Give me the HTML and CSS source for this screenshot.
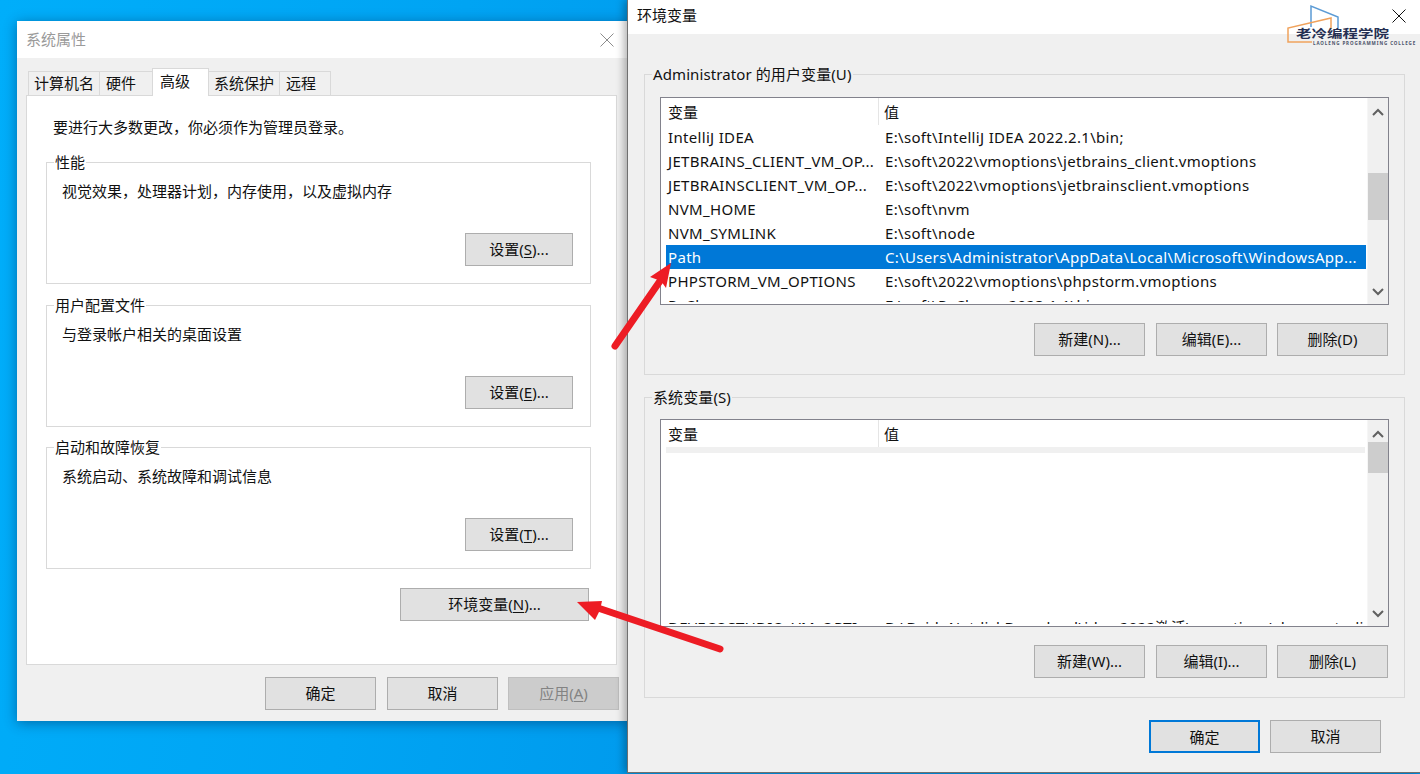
FILE: index.html
```html
<!DOCTYPE html>
<html lang="zh-CN">
<head>
<meta charset="utf-8">
<title>环境变量</title>
<link rel="stylesheet" href="styles.css">
</head>
<body>
<main class="desktop">
  <section class="window props">
    <header class="titlebar props-title">
      <span class="title-muted">系统属性</span>
      <svg class="close" viewBox="0 0 14 14"><path d="M.5.5l13 13M13.500.5l-13 13" stroke="#8c8c8c" fill="none"/></svg>
    </header>
    <div class="props-body">
      <nav class="tabs">
        <span class="tab">计算机名</span>
        <span class="tab tab-wide">硬件</span>
        <span class="tab tab-active">高级</span>
        <span class="tab">系统保护</span>
        <span class="tab tab-wide">远程</span>
      </nav>
      <div class="panel">
        <p class="intro">要进行大多数更改，你必须作为管理员登录。</p>
        <fieldset class="group">
          <legend>性能</legend>
          <p class="group-text">视觉效果，处理器计划，内存使用，以及虚拟内存</p>
          <button class="btn btn-small">设置(<u>S</u>)...</button>
        </fieldset>
        <fieldset class="group">
          <legend>用户配置文件</legend>
          <p class="group-text">与登录帐户相关的桌面设置</p>
          <button class="btn btn-small">设置(<u>E</u>)...</button>
        </fieldset>
        <fieldset class="group">
          <legend>启动和故障恢复</legend>
          <p class="group-text">系统启动、系统故障和调试信息</p>
          <button class="btn btn-small">设置(<u>T</u>)...</button>
        </fieldset>
        <div class="env-row"><button class="btn btn-env">环境变量(<u>N</u>)...</button></div>
      </div>
      <footer class="props-foot">
        <button class="btn">确定</button>
        <button class="btn">取消</button>
        <button class="btn btn-disabled">应用(<u>A</u>)</button>
      </footer>
    </div>
  </section>

  <section class="window env">
    <header class="titlebar env-title">
      <span class="env-name">环境变量</span>
      <svg class="close" viewBox="0 0 14 14"><path d="M.5.5l13 13M13.500.5l-13 13" stroke="#111" fill="none"/></svg>
    </header>
    <div class="env-body">
      <fieldset class="var-group">
        <legend>Administrator 的用户变量(U)</legend>
        <div class="list">
          <div class="list-main">
            <div class="list-head"><span class="head-name">变量</span><span class="head-val">值</span></div>
            <div class="row"><span class="cell-name">IntelliJ IDEA</span><span class="cell-val">E:\soft\IntelliJ IDEA 2022.2.1\bin;</span></div>
            <div class="row"><span class="cell-name">JETBRAINS_CLIENT_VM_OP...</span><span class="cell-val">E:\soft\2022\vmoptions\jetbrains_client.vmoptions</span></div>
            <div class="row"><span class="cell-name">JETBRAINSCLIENT_VM_OP...</span><span class="cell-val">E:\soft\2022\vmoptions\jetbrainsclient.vmoptions</span></div>
            <div class="row"><span class="cell-name">NVM_HOME</span><span class="cell-val">E:\soft\nvm</span></div>
            <div class="row"><span class="cell-name">NVM_SYMLINK</span><span class="cell-val">E:\soft\node</span></div>
            <div class="row row-selected"><span class="cell-name">Path</span><span class="cell-val">C:\Users\Administrator\AppData\Local\Microsoft\WindowsApp...</span></div>
            <div class="row"><span class="cell-name">PHPSTORM_VM_OPTIONS</span><span class="cell-val">E:\soft\2022\vmoptions\phpstorm.vmoptions</span></div>
            <div class="row"><span class="cell-name">PyCharm</span><span class="cell-val">E:\soft\PyCharm 2023.1.1\bin;</span></div>
          </div>
          <div class="scrollbar">
            <svg class="arrow" viewBox="0 0 12 8"><path d="M1 7l5-5 5 5" stroke="#606060" stroke-width="2" fill="none"/></svg>
            <div class="track"><div class="thumb thumb-user"></div></div>
            <svg class="arrow" viewBox="0 0 12 8"><path d="M1 1l5 5 5-5" stroke="#606060" stroke-width="2" fill="none"/></svg>
          </div>
        </div>
        <div class="actions">
          <button class="btn">新建(N)...</button>
          <button class="btn btn-nudge">编辑(E)...</button>
          <button class="btn">删除(D)</button>
        </div>
      </fieldset>
      <fieldset class="var-group var-group-sys">
        <legend>系统变量(S)</legend>
        <div class="list">
          <div class="list-main">
            <div class="list-head"><span class="head-name">变量</span><span class="head-val">值</span></div>
            <div class="blank-band"></div>
            <div class="blank-rows"></div>
            <div class="row"><span class="cell-name">DEVECOSTUDIO_VM_OPTI...</span><span class="cell-val">D:\BaiduNetdiskDownload\idea 2022激活\vmoptions\devecostudio.vmoptions</span></div>
          </div>
          <div class="scrollbar">
            <svg class="arrow" viewBox="0 0 12 8"><path d="M1 7l5-5 5 5" stroke="#606060" stroke-width="2" fill="none"/></svg>
            <div class="track"><div class="thumb thumb-sys"></div></div>
            <svg class="arrow" viewBox="0 0 12 8"><path d="M1 1l5 5 5-5" stroke="#606060" stroke-width="2" fill="none"/></svg>
          </div>
        </div>
        <div class="actions">
          <button class="btn">新建(W)...</button>
          <button class="btn btn-nudge">编辑(I)...</button>
          <button class="btn">删除(L)</button>
        </div>
      </fieldset>
      <footer class="env-foot">
        <button class="btn btn-default">确定</button>
        <button class="btn">取消</button>
      </footer>
    </div>
  </section>

  <svg class="arrows" viewBox="0 0 1420 774">
    <path class="shaft" d="M615 346L660 281"/>
    <path class="shaft" d="M720 649L598 608"/>
    <path class="head" d="M671 263L650 277L661 281L666 288Z"/>
    <path class="head" d="M577 602L602 601L600 610L595 620Z"/>
  </svg>

  <div class="logo">
    <svg class="logo-mark" viewBox="0 0 130 44">
      <path d="M25 23V2L52 13V24" stroke="#5b9bd5" stroke-width="1.500" fill="none"/>
      <path d="M45 25V14L2 24V38H26" stroke="#f0a25c" stroke-width="1.500" fill="none"/>
    </svg>
    <span class="logo-cn">老冷编程学院</span>
    <span class="logo-en">LAOLENG PROGRAMMING COLLEGE</span>
  </div>
</main>
</body>
</html>
```
FILE: styles.css
```css
* { box-sizing: border-box; }
html, body { margin: 0; height: 100%; }
body { overflow: hidden; font: 15px/20px "Noto Sans", "Noto Sans CJK SC", sans-serif; color: #111; }
p { margin: 0; }
u { text-underline-offset: 2px; }

.desktop {
  position: relative;
  width: 1420px;
  height: 774px;
  overflow: hidden;
  background: linear-gradient(100deg, #00aefa 0%, #00a4f3 30%, #0096ea 60%, #0090e4 100%);
}

.window {
  position: absolute;
  background: #f0f0f0;
  display: flex;
  flex-direction: column;
}
.props {
  left: 17px; top: 21px; width: 611px; height: 700px;
  box-shadow: 0 2px 12px rgba(0, 30, 70, .45);
}
.env {
  left: 627px; top: 0; width: 793px; height: 773px;
  border-left: 1px solid #707070;
  border-bottom: 1px solid #707070;
  box-shadow: -3px 0 8px rgba(0, 0, 0, .3);
}

.titlebar {
  background: #fff;
  display: flex;
  justify-content: space-between;
  align-items: center;
  flex: none;
}
.props-title { height: 37px; padding: 0 14px 0 9px; }
.env-title { height: 34px; padding: 0 14px 3px 9px; }
.title-muted { color: #9a9a9a; margin-bottom: 2px; }
.env-name { margin-bottom: 2px; }
.close { width: 14px; height: 14px; }

.props-body { flex: 1; padding: 10px 9px 0; display: flex; flex-direction: column; }
.tabs { display: flex; height: 27px; margin-left: 2px; align-items: flex-end; position: relative; z-index: 1; }
.tab {
  height: 24px;
  padding: 0 5px;
  line-height: 22px;
  white-space: nowrap;
  border: 1px solid #d9d9d9;
  border-bottom: 0;
  border-right: 0;
}
.tab-wide { padding-left: 6px; padding-right: 16px; }
.tab-wide:last-child { padding-right: 14px; border-right: 1px solid #d9d9d9; }
.tab-active {
  height: 28px;
  padding: 1px 18px 0 7px;
  background: #fff;
  border-right: 1px solid #d9d9d9;
  margin-bottom: -1px;
}
.tab-active + .tab { border-left: 0; }

.panel {
  height: 570px;
  margin-right: 2px;
  background: #fff;
  border: 1px solid #d9d9d9;
  padding: 21px 25px 0 19px;
  display: flex;
  flex-direction: column;
  gap: 10px;
}
.intro { padding-left: 7px; margin-bottom: 5px; }
.group {
  margin: 0;
  height: 132px;
  padding: 0 17px 0 15px;
  border: 1px solid #d9d9d9;
  display: flex;
  flex-direction: column;
  min-width: 0;
}
.group:first-of-type { margin-bottom: 1px; }
.group legend { padding: 0 1px; margin-left: -8px; line-height: 20px; }
.group-text { margin-top: 9px; }
.btn {
  font: inherit;
  color: #111;
  width: 111px;
  height: 33px;
  padding: 0 0 2px;
  background: #e1e1e1;
  border: 1px solid #adadad;
  border-radius: 0;
  line-height: 20px;
  white-space: nowrap;
}
.btn-small { width: 108px; align-self: flex-end; margin-top: 32px; }
.env-row { display: flex; justify-content: flex-end; margin-top: 9px; margin-right: 2px; }
.btn-env { width: 189px; }
.btn-disabled { background: #ccc; border-color: #bfbfbf; color: #838383; }
.btn-default { border: 2px solid #0078d7; padding: 0; }

.props-foot { display: flex; justify-content: flex-end; gap: 11px; margin-top: 12px; }
.props-foot .btn-disabled { margin-left: -1px; }

.env-body { flex: 1; padding: 30px 15px 0 16px; display: flex; flex-direction: column; gap: 12px; }
.var-group {
  margin: 0;
  height: 311px;
  padding: 0 15px 0 15px;
  border: 1px solid #d9d9d9;
  min-width: 0;
  display: flex;
  flex-direction: column;
}
.var-group legend { padding: 0 1px; margin-left: -8px; line-height: 20px; letter-spacing: .1px; }
.list {
  margin-top: 13px;
  height: 208px;
  background: #fff;
  border: 1px solid #82828c;
  display: flex;
  overflow: hidden;
  flex: none;
}
.var-group-sys .list { margin-top: 12px; }
.list-main { flex: 1; min-width: 0; height: 204px; padding-left: 5px; overflow: hidden; }
.list-head { display: flex; height: 27px; align-items: flex-start; }
.head-name { width: 213px; padding-left: 2px; border-right: 1px solid #e5e5e5; height: 27px; line-height: 28px; }
.head-val { padding-left: 5px; line-height: 28px; }
.row { display: flex; height: 24px; line-height: 24px; white-space: nowrap; letter-spacing: .32px; }
.cell-name { width: 213px; padding-left: 2px; flex: none; overflow: hidden; }
.cell-val { padding-left: 6px; }
.row-selected { background: #0078d7; color: #fff; margin-right: 1px; }
.blank-band { height: 6px; margin-right: 2px; background: #f0f0f0; }
.blank-rows { height: 162px; }

.scrollbar { width: 21px; flex: none; background: #f0f0f0; display: flex; flex-direction: column; align-items: center; border-left: 1px solid #f6f6f6; }
.arrow { width: 12px; height: 8px; margin: 10px 0 8px; flex: none; }
.track { flex: 1; width: 100%; }
.thumb { background: #cdcdcd; width: 100%; }
.thumb-user { height: 47px; margin-top: 49px; }
.thumb-sys { height: 31px; margin-top: -4px; }

.actions { display: flex; justify-content: flex-end; gap: 10px; margin-top: 18px; margin-right: 1px; }
.btn-nudge { margin-left: 1px; }
.env-foot { display: flex; justify-content: flex-end; gap: 10px; margin-top: 10px; margin-right: 24px; }

.arrows { position: absolute; inset: 0; width: 1420px; height: 774px; pointer-events: none; }
.shaft { stroke: #ed1c24; stroke-width: 7; stroke-linecap: round; fill: none; }
.head { fill: #ed1c24; }

.logo { position: absolute; left: 1286px; top: 4px; width: 130px; height: 44px; }
.logo-mark { position: absolute; inset: 0; width: 130px; height: 44px; }
.logo-cn {
  position: absolute; left: 10px; top: 25px;
  font-size: 15.500px; line-height: 11px; font-weight: 700; color: #252f52; white-space: nowrap;
  transform: scaleY(.72);
}
.logo-en {
  position: absolute; left: 27px; top: 37px;
  font-size: 4.500px; line-height: 5px; font-weight: 700; letter-spacing: .9px; color: #4a5068; white-space: nowrap;
}
```
